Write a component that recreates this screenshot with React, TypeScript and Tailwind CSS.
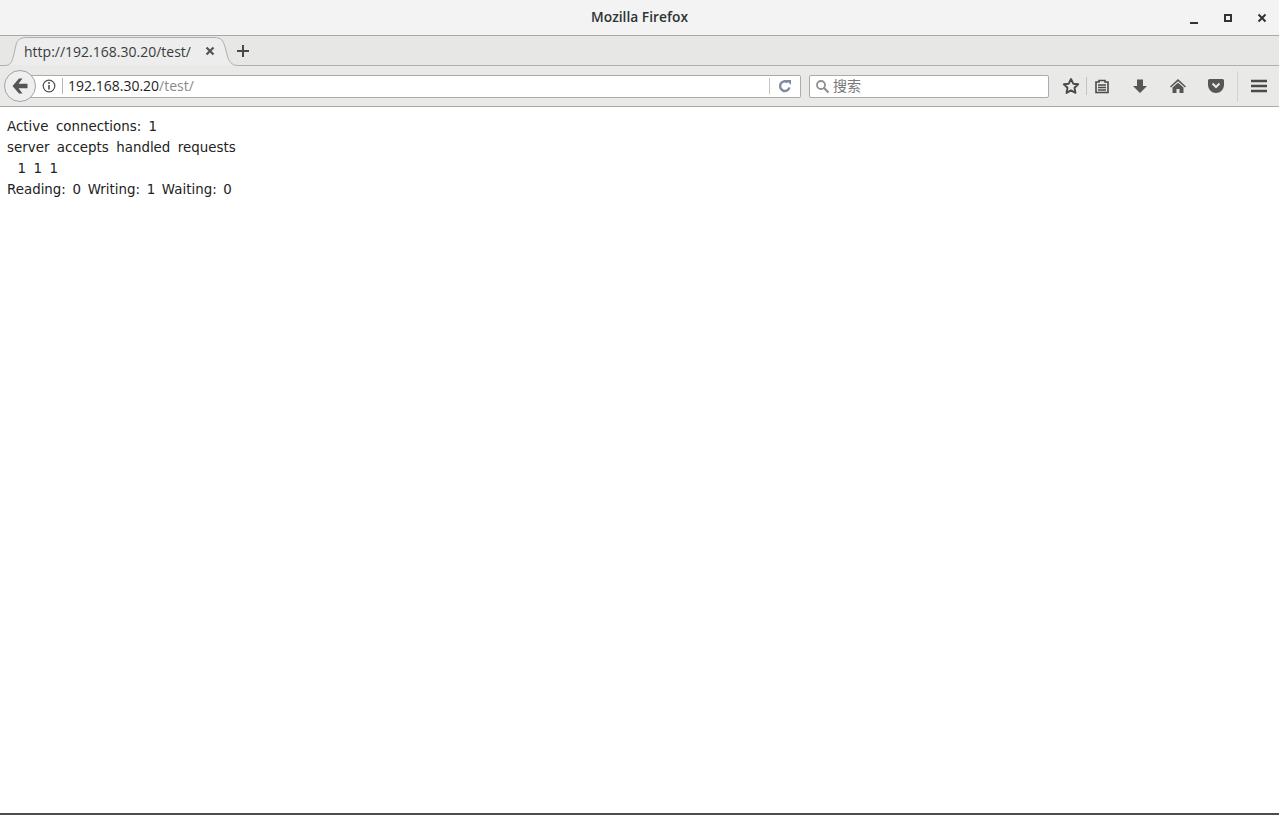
import React from 'react';

const uiFont = "[font-family:'Open_Sans','Noto_Sans_CJK_SC',sans-serif]";

const TitleBar = () => (
  <div className="grid h-[35px] grid-cols-[1fr_auto_1fr] items-center bg-[#f3f3f3]">
    <div />
    <span className="font-['Open_Sans',sans-serif] text-[13.8px] font-semibold text-[#2e3436]">Mozilla Firefox</span>
    <div className="flex items-center justify-end">
      <svg width="12" height="12" viewBox="0 0 12 12" className="mr-[22px] mt-[2px]"><rect x="2" y="9" width="8" height="2" fill="#2e3436" /></svg>
      <svg width="12" height="12" viewBox="0 0 12 12" className="mr-[22px]"><path d="M2 2h8v8H2z M4 4v4h4V4z" fill="#2e3436" fillRule="evenodd" /></svg>
      <svg width="12" height="12" viewBox="0 0 12 12" className="mr-[11px]"><path d="M2.500 2.500l7 7M9.500 2.500l-7 7" stroke="#2e3436" strokeWidth="2" /></svg>
    </div>
  </div>
);

const TabBar = () => (
  <div className="relative flex h-[31px] items-center border-t border-[#a8a8a4] bg-[#e7e7e5]">
    {/* tab outline */}
    <svg width="1279" height="30" viewBox="0 0 1279 30" className="absolute left-0 top-0">
      <path d="M0 29.500 H5 C11 29.500 12 25 13.500 20 L16 9 C17 4 20 1.500 27 1.500 H214 C221 1.500 223 4 225 11 L228 22 C230 27 233 29.500 238 29.500 H1279" fill="#ecedec" stroke="#aeb0ae" />
    </svg>
    <span className={`relative ml-[24px] w-[167px] text-[14px] text-[#3b3b3b] ${uiFont}`}>http://192.168.30.20/test/</span>
    <svg width="10" height="10" viewBox="0 0 10 10" className="relative ml-[14px]"><path d="M1.500 1.500l7 7M8.500 1.500l-7 7" stroke="#555" strokeWidth="2.200" /></svg>
    <svg width="14" height="14" viewBox="0 0 14 14" className="relative ml-[21px]"><path d="M7 1v12M1 7h12" stroke="#4a4a4a" strokeWidth="2" /></svg>
  </div>
);

const NavBar = () => (
  <div className="flex h-[41px] items-center border-b border-[#a9a9a6] bg-[#e9e9e7] pl-[4px]">
    <div className="relative z-10 flex h-[32px] w-[32px] shrink-0 items-center justify-center rounded-full border border-[#a3a3a3] bg-[#efefef]">
      <svg width="18" height="16" viewBox="0 0 18 16"><path d="M8 .5L1.500 8 8 15.500h3.500L7.500 10.200H16.500V5.800H7.500L11.500 .5z" fill="#555" /></svg>
    </div>
    <div className="ml-[-6px] flex h-[23px] w-[771px] items-center rounded-r-[2px] border border-l-0 border-[#ababab] bg-white pl-[12px]">
      <svg width="14" height="14" viewBox="0 0 14 14"><circle cx="7" cy="7" r="5.800" fill="none" stroke="#4d4d4d" strokeWidth="1.200" /><path d="M7 6v4.500" stroke="#4d4d4d" strokeWidth="1.600" /><circle cx="7" cy="4" r="1" fill="#4d4d4d" /></svg>
      <div className="ml-[6px] h-[16px] w-px bg-[#b5b5b5]" />
      <span className={`ml-[5px] mt-[-2px] text-[14px] text-[#1e1e1e] ${uiFont}`}>192.168.30.20<span className="text-[#8a8a8a]">/test/</span></span>
      <div className="ml-auto h-[16px] w-px bg-[#c4c4c4]" />
      <svg width="14" height="14" viewBox="0 0 14 14" className="mx-[8px]"><path d="M11.500 8.500A4.800 4.800 0 1 1 9.800 3.300" fill="none" stroke="#7b8a9c" strokeWidth="2.400" /><path d="M8 1h5v5z" fill="#7b8a9c" /></svg>
    </div>
    <div className="ml-[8px] flex h-[23px] w-[240px] items-center rounded-[2px] border border-[#ababab] bg-white pl-[5px]">
      <svg width="15" height="15" viewBox="0 0 15 15"><circle cx="6" cy="6" r="4" fill="none" stroke="#8f8f8f" strokeWidth="1.800" /><path d="M9 9l4.500 4.500" stroke="#8f8f8f" strokeWidth="2.200" /></svg>
      <span className={`ml-[3px] mt-[-2px] text-[14px] text-[#777] ${uiFont}`}>搜索</span>
    </div>
    <svg width="18" height="18" viewBox="0 0 18 18" className="ml-[13px]"><path d="M9 2l2.200 4.700 5 .6-3.700 3.500 1 5.100L9 13.400l-4.500 2.500 1-5.100L1.800 7.300l5-.6z" fill="none" stroke="#4a4a4a" strokeWidth="1.900" strokeLinejoin="round" /></svg>
    <div className="ml-[6px] h-[18px] w-px bg-[#c4c4c4]" />
    <svg width="16" height="16" viewBox="0 0 16 16" className="ml-[7px]"><path d="M2 4h3V2.500h6V4h3v10.500H2z" fill="none" stroke="#4a4a4a" strokeWidth="1.600" /><path d="M4 7h8M4 9.500h8M4 12h8" stroke="#4a4a4a" strokeWidth="1.400" /></svg>
    <svg width="16" height="16" viewBox="0 0 16 16" className="ml-[22px]"><path d="M5 1.500h6v6.500h4l-7 7-7-7h4z" fill="#565656" /></svg>
    <svg width="18" height="16" viewBox="0 0 18 16" className="ml-[21px]"><path d="M9 1L1 8.500l1 1L9 3.200l7 6.300 1-1z" fill="#565656" /><path d="M3.500 9.500L9 4.800l5.500 4.700V15H10.500v-4h-3v4H3.500z" fill="#565656" /></svg>
    <svg width="18" height="16" viewBox="0 0 18 16" className="ml-[20px]"><path d="M2.500 1h13A1.500 1.500 0 0 1 17 2.500V7a8 8 0 0 1-16 0V2.500A1.500 1.500 0 0 1 2.500 1z" fill="#565656" /><path d="M5.500 5.500L9 9l3.500-3.500" fill="none" stroke="#e9e9e7" strokeWidth="2" /></svg>
    <div className="ml-[12px] h-[31px] w-px bg-[#d4d4d2]" />
    <svg width="16" height="14" viewBox="0 0 16 14" className="ml-[13px]"><path d="M0 2h16M0 7h16M0 12h16" stroke="#4a4a4a" strokeWidth="2.400" /></svg>
  </div>
);

const App: React.FC = () => {
  return (
    <div className="flex h-[815px] w-full flex-col overflow-hidden bg-white">
      <TitleBar />
      <TabBar />
      <NavBar />
      {/* nginx stub_status output */}
      <div className="flex-1 whitespace-pre bg-white pl-[7px] pt-[9px] font-['DejaVu_Sans',sans-serif] text-[13.4px] leading-[21px] text-[#222] [word-spacing:3.200px]">
        <div>Active connections: 1</div>
        <div>server accepts handled requests</div>
        <div className="pl-[3px]"> 1 1 1</div>
        <div className="[word-spacing:2.400px]">Reading: 0 Writing: 1 Waiting: 0</div>
      </div>
      <div className="h-[2px] bg-[#4a4f4c]" />
    </div>
  );
};

export default App;
